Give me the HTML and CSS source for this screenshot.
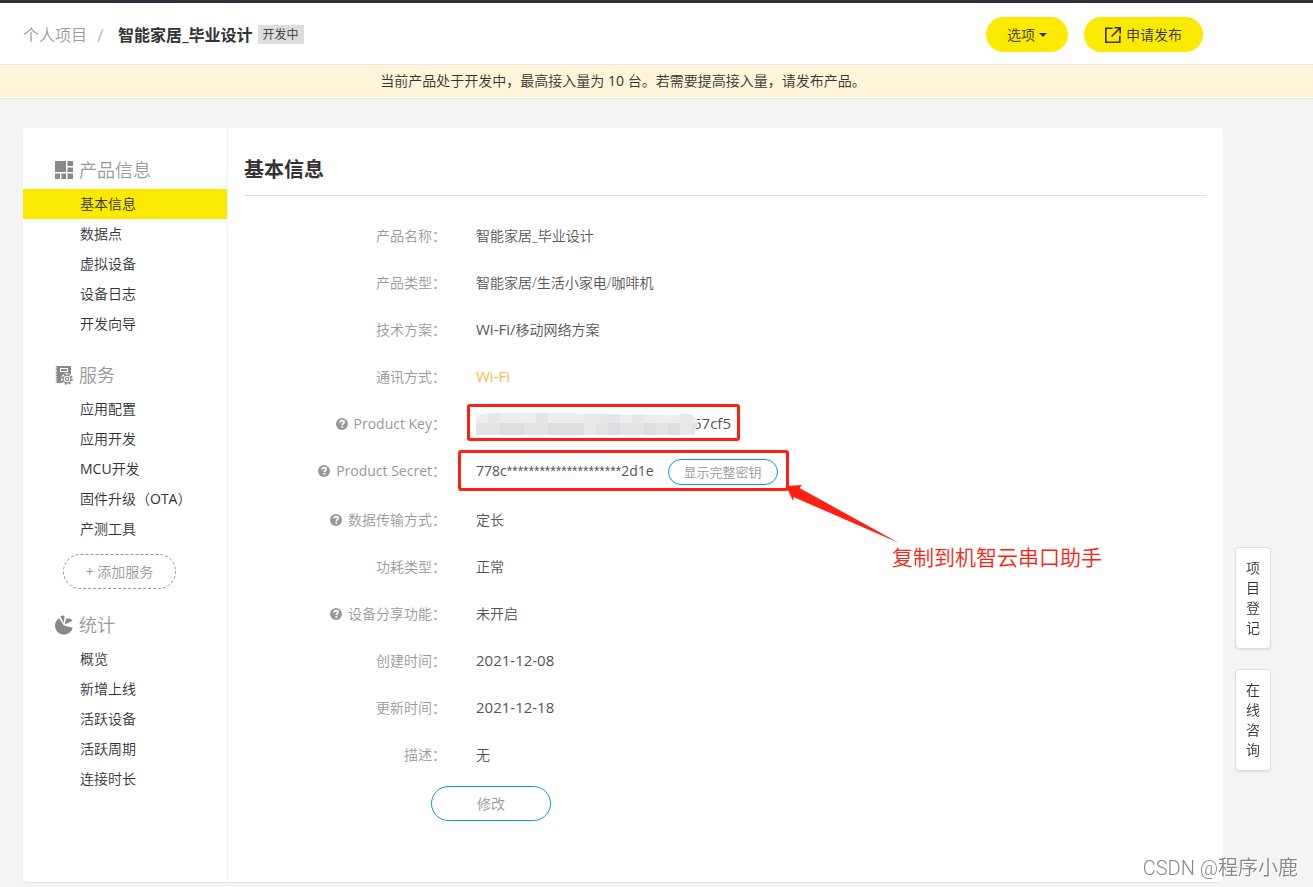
FILE: index.html
```html
<!DOCTYPE html>
<html lang="zh-CN">
<head>
<meta charset="utf-8">
<meta name="viewport" content="width=device-width, initial-scale=1">
<title>智能家居_毕业设计 - 基本信息</title>
<link rel="stylesheet" href="styles.css">
</head>
<body>
<svg class="defs" width="0" height="0" aria-hidden="true">
  <symbol id="help" viewBox="0 0 12 12">
    <circle cx="6" cy="6" r="6" fill="#999"/>
    <path d="M4 4.600C4 3.300 4.900 2.700 6.100 2.700c1.200 0 2 .7 2 1.600 0 1.300-1.800 1.400-1.800 2.700" fill="none" stroke="#fff" stroke-width="1.700"/>
    <rect x="5.400" y="7.900" width="1.800" height="1.700" fill="#fff"/>
  </symbol>
</svg>

<header class="header">
  <nav class="crumbs" aria-label="路径">
    <a href="#" class="crumb-link">个人项目</a>
    <span class="crumb-sep">/</span>
    <h1 class="crumb-title">智能家居_毕业设计</h1>
    <span class="tag">开发中</span>
  </nav>
  <div class="actions">
    <button type="button" class="btn-yellow">选项<span class="caret"></span></button>
    <button type="button" class="btn-yellow btn-publish">
      <svg width="16" height="16" viewBox="0 0 16 16" fill="none" stroke="#333" stroke-width="1.600" aria-hidden="true">
        <path d="M7.500 1.300H.8v14h14V8.500M6.500 9.500L15 1M9.500.8h5.700v5.700"/>
      </svg>
      申请发布
    </button>
  </div>
</header>
<p class="notice">当前产品处于开发中，最高接入量为 <span class="en">10</span> 台。若需要提高接入量，请发布产品。</p>

<div class="panel">
  <aside class="sidebar">
    <section class="group">
      <h3 class="group-title">
        <svg width="18" height="18" viewBox="0 0 18 18" fill="#888" aria-hidden="true">
          <path d="M0 0h11v11H0zM12.500 0H18v5h-5.500zM12.500 6.500H18V11h-5.500zM0 12.500h5V18H0zM6.500 12.500H11V18H6.500zM12.500 12.500H18V18h-5.500z"/>
        </svg>
        产品信息
      </h3>
      <a href="#" class="item item-active">基本信息</a>
      <a href="#" class="item">数据点</a>
      <a href="#" class="item">虚拟设备</a>
      <a href="#" class="item">设备日志</a>
      <a href="#" class="item">开发向导</a>
    </section>
    <section class="group">
      <h3 class="group-title">
        <svg width="18" height="20" viewBox="0 0 18 20" aria-hidden="true">
          <path d="M2 1h14v9H8v8H2z" fill="#888"/>
          <path d="M1.500 1v17" stroke="#888" stroke-width="1.500" stroke-dasharray="1.200 1"/>
          <rect x="5.500" y="3.500" width="7" height="3" fill="none" stroke="#fff"/>
          <circle cx="12" cy="14" r="6" fill="#fff"/>
          <circle cx="12" cy="14" r="5" fill="none" stroke="#888" stroke-width="1.600" stroke-dasharray="2 1.927"/>
          <circle cx="12" cy="14" r="3.900" fill="none" stroke="#888" stroke-width="1.200"/>
          <circle cx="12" cy="14" r="1.600" fill="none" stroke="#888" stroke-width="1.200"/>
        </svg>
        服务
      </h3>
      <a href="#" class="item">应用配置</a>
      <a href="#" class="item">应用开发</a>
      <a href="#" class="item"><span class="en">MCU</span>开发</a>
      <a href="#" class="item">固件升级（<span class="en">OTA</span>）</a>
      <a href="#" class="item">产测工具</a>
      <button type="button" class="btn-add"><span class="en">+</span> 添加服务</button>
    </section>
    <section class="group">
      <h3 class="group-title">
        <svg width="18" height="20" viewBox="0 0 18 20" fill="#888" aria-hidden="true">
          <path d="M9 10.500L4 3.200A9 8.900 0 1 0 17.700 12.800z"/>
          <path d="M5.300 1.200Q7.500.3 9.600.8L8.800 8z"/>
          <path d="M11 3.500l5 .2 1.300 2.300L9.800 9.400z"/>
        </svg>
        统计
      </h3>
      <a href="#" class="item">概览</a>
      <a href="#" class="item">新增上线</a>
      <a href="#" class="item">活跃设备</a>
      <a href="#" class="item">活跃周期</a>
      <a href="#" class="item">连接时长</a>
    </section>
  </aside>

  <main class="main">
    <h2 class="main-title">基本信息</h2>
    <dl class="info">
      <div class="row"><dt>产品名称：</dt><dd>智能家居_毕业设计</dd></div>
      <div class="row"><dt>产品类型：</dt><dd>智能家居/生活小家电/咖啡机</dd></div>
      <div class="row"><dt>技术方案：</dt><dd><span class="latin">Wi-Fi/</span>移动网络方案</dd></div>
      <div class="row"><dt>通讯方式：</dt><dd class="orange"><span class="latin">Wi-Fi</span></dd></div>
      <div class="row">
        <dt class="en"><svg class="help" width="12" height="12"><use href="#help"/></svg>Product Key：</dt>
        <dd class="marked">
          <svg class="mosaic" width="226" height="24" viewBox="0 0 226 24" aria-hidden="true">
            <clipPath id="smear"><path d="M0 6Q2 1 12 1H100L112 2 202 3Q210 0 216 3 222 6 222 11L218 23H0z"/></clipPath>
            <g clip-path="url(#smear)">
              <path d="M0 0h226v11H0z" fill="#ededee"/>
              <path d="M0 11h226v12H0z" fill="#e3e3e4"/>
              <path d="M12 0h12v11H12zM108 0h24v11h-24zM156 0h12v11h-12zM204 0h12v11h-12z" fill="#e7e7e8"/>
              <path d="M60 0h12v11H60zM132 0h12v11h-12z" fill="#e2e6eb"/>
              <path d="M24 11h12v12H24zM36 11h12v12H36zM72 11h36v12H72zM132 11h12v12h-12zM168 11h12v12h-12zM192 11h12v12h-12z" fill="#dddde0"/>
              <path d="M108 11h12v12h-12zM204 11h12v12h-12z" fill="#ebe9e8"/>
            </g>
          </svg>
          <span class="key-tail latin">57cf5</span>
          <span class="mark mark-key"></span>
        </dd>
      </div>
      <div class="row">
        <dt class="en"><svg class="help" width="12" height="12"><use href="#help"/></svg>Product Secret：</dt>
        <dd class="marked">
          <span class="en">778c<span class="stars">*********************</span>2d1e</span>
          <button type="button" class="btn-reveal">显示完整密钥</button>
          <span class="mark mark-secret"></span>
          <svg class="arrow" width="114" height="60" viewBox="0 0 114 60" aria-hidden="true">
            <path d="M0 1L16 0 13.500 3 113 58 7.500 12 7 16z" fill="#ff2010"/>
          </svg>
          <span class="note">复制到机智云串口助手</span>
        </dd>
      </div>
      <div class="row"><dt><svg class="help" width="12" height="12"><use href="#help"/></svg>数据传输方式：</dt><dd>定长</dd></div>
      <div class="row"><dt>功耗类型：</dt><dd>正常</dd></div>
      <div class="row"><dt><svg class="help" width="12" height="12"><use href="#help"/></svg>设备分享功能：</dt><dd>未开启</dd></div>
      <div class="row"><dt>创建时间：</dt><dd><span class="latin">2021-12-08</span></dd></div>
      <div class="row"><dt>更新时间：</dt><dd><span class="latin">2021-12-18</span></dd></div>
      <div class="row"><dt>描述：</dt><dd>无</dd></div>
    </dl>
    <button type="button" class="btn-edit">修改</button>
  </main>
</div>

<div class="floaters">
  <button type="button" class="floater">项目登记</button>
  <button type="button" class="floater">在线咨询</button>
</div>
<div class="watermark">CSDN @程序小鹿</div>
</body>
</html>
```
FILE: styles.css
```css
* { box-sizing: border-box; }

body {
  margin: 0;
  border-top: 3px solid #2b2f36;
  background: #f4f4f4;
  color: #333;
  font: 350 14px/24px "Open Sans", "Noto Sans CJK SC", sans-serif;
}

h1, h2, h3, p, dl, dd { margin: 0; }
a { color: inherit; text-decoration: none; }
button { font: inherit; color: inherit; cursor: pointer; padding: 0; }
svg { flex: none; }
.defs { position: absolute; }
.en { font-weight: 400; }
.latin { font-size: 15px; font-weight: 400; line-height: 22px; }

.header {
  display: flex;
  align-items: center;
  justify-content: space-between;
  height: 62px;
  padding: 2px 110px 0 23px;
  background: #fff;
  border-bottom: 1px solid #e8e6e0;
}
.crumbs { display: flex; align-items: center; font-size: 16px; }
.crumb-link { color: #999; }
.crumb-sep { width: 31px; padding-left: 10px; color: #bbb; font-size: 18px; font-weight: 400; }
.crumb-title { font-size: 16px; font-weight: 700; }
.tag {
  margin-left: 5px;
  padding: 0 5px;
  background: #ddd;
  font-size: 12px;
  line-height: 19px;
}
.actions { display: flex; gap: 16px; }
.btn-yellow {
  display: flex;
  align-items: center;
  height: 35px;
  padding: 0 21px;
  border: 0;
  border-radius: 18px;
  background: #fbea00;
}
.btn-publish { gap: 5px; }
.caret {
  margin-left: 4px;
  border: 4px solid transparent;
  border-top-color: #333;
  border-bottom: 0;
}

.notice {
  padding: 4px 90px 4px 23px;
  background: #fdf5d9;
  border-bottom: 1px solid #fff;
  box-shadow: 0 1px 0 #e6e6e6;
  text-align: center;
}

.panel {
  display: flex;
  min-height: 754px;
  margin: 30px 90px 5px 23px;
  background: #fff;
  border-radius: 4px;
  box-shadow: 0 1px 1px #e4e4e4;
}

.sidebar {
  display: flex;
  flex-direction: column;
  gap: 17px;
  flex: none;
  width: 205px;
  padding-top: 23px;
  border-right: 1px solid #f0f0f0;
}
.group-title {
  display: flex;
  align-items: center;
  gap: 6px;
  height: 38px;
  padding-left: 32px;
  color: #999;
  font-size: 18px;
  font-weight: 350;
}
.item { display: block; padding-left: 57px; line-height: 30px; }
.item-active { background: #fbea00; }
.btn-add {
  display: block;
  width: 113px;
  height: 35px;
  margin: 10px 0 0 40px;
  border: 1px dashed #999;
  border-radius: 18px;
  background: #fff;
  color: #999;
}

.main { flex: 1; padding: 23px 17px 60px 16px; }
.main-title {
  padding-bottom: 6px;
  border-bottom: 1px solid #ddd;
  font-size: 20px;
  line-height: 38px;
}
.info { padding-top: 17px; }
.row { display: flex; gap: 30px; padding: 11px 0 12px; }
.row dt {
  display: flex;
  align-items: center;
  justify-content: flex-end;
  gap: 6px;
  flex: none;
  width: 202px;
  height: 24px;
  color: #999;
}
.row dd { flex: 1; color: #555; }
.row .orange { color: #fdb94a; }

.marked { position: relative; display: flex; }
.mosaic { position: relative; z-index: 1; margin-right: -9px; }
.stars { font-family: "Liberation Sans", sans-serif; }
.btn-reveal {
  width: 110px;
  height: 26px;
  margin-left: 14px;
  border: 1px solid #1296db;
  border-radius: 13px;
  background: #fff;
  color: #999;
  font-size: 13px;
  line-height: 24px;
}
.mark {
  position: absolute;
  border: 3px solid #ff2010;
  border-radius: 3px;
}
.mark-key { left: -9px; top: -8px; width: 273px; height: 37px; }
.mark-secret { left: -18px; top: -9px; width: 331px; height: 41px; }
.arrow { position: absolute; left: 310px; top: 26px; }
.note {
  position: absolute;
  left: 416px;
  top: 83px;
  color: #ff2010;
  font-size: 21px;
  line-height: 30px;
}
.btn-edit {
  width: 120px;
  height: 35px;
  margin: 7px 0 0 187px;
  border: 1px solid #1296db;
  border-radius: 18px;
  background: #fff;
  color: #999;
}

.floaters {
  position: fixed;
  right: 42px;
  bottom: 116px;
  display: flex;
  flex-direction: column;
  gap: 20px;
}
.floater {
  width: 36px;
  padding: 10px;
  border: 1px solid #ddd;
  border-radius: 4px;
  background: #fff;
  box-shadow: 0 1px 2px #e0e0e0;
  line-height: 20px;
}
.watermark {
  position: fixed;
  right: 15px;
  bottom: 4px;
  color: #888;
  font-size: 20px;
  font-weight: 350;
  line-height: 30px;
  font-family: Roboto, "Noto Sans CJK SC", sans-serif;
  text-shadow: 1px 1px 0 #fff;
}
```
